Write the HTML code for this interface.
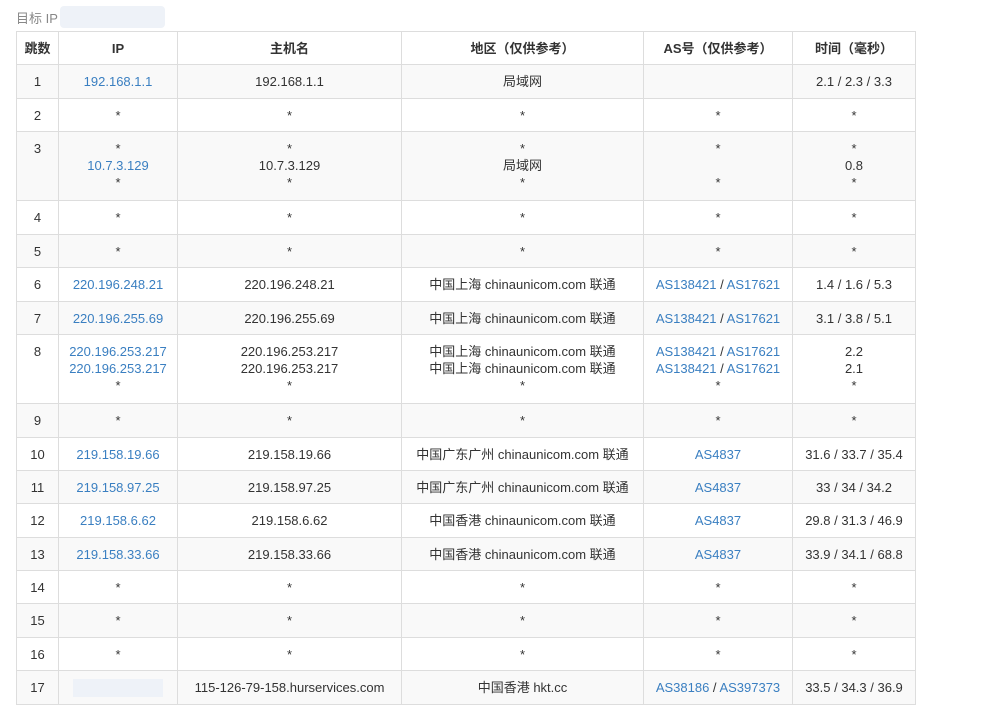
<!DOCTYPE html>
<html><head><meta charset="utf-8"><style>
body{margin:0;background:#fff;font-family:"Liberation Sans","Noto Sans CJK SC",sans-serif;font-size:13px;color:#333;}
.t{position:absolute;left:16px;top:8px;color:#888;font-size:13px;}
.blur{position:absolute;background:#eef2f8;border-radius:4px;}
table{position:absolute;left:16px;top:31px;border-collapse:collapse;table-layout:fixed;width:899px;}
td,th{border:1px solid #ddd;text-align:center;padding:0;line-height:17px;vertical-align:middle;}
th{font-weight:bold;height:32px;color:#333;}
tbody tr:nth-child(odd){background:#f9f9f9;}
a{color:#3a7fc1;text-decoration:none;}
.v td{vertical-align:top;padding-top:8px;}
</style></head><body>
<div class="t">目标 IP</div>
<div class="blur" style="left:60px;top:6px;width:105px;height:22px;"></div>
<table>
<colgroup><col style="width:42px"><col style="width:119px"><col style="width:224px"><col style="width:242px"><col style="width:149px"><col style="width:123px"></colgroup>
<thead><tr><th>跳数</th><th>IP</th><th>主机名</th><th>地区（仅供参考）</th><th>AS号（仅供参考）</th><th>时间（毫秒）</th></tr></thead>
<tbody>
<tr style="height:34px"><td>1</td><td><a>192.168.1.1</a></td><td>192.168.1.1</td><td>局域网</td><td></td><td>2.1 / 2.3 / 3.3</td></tr>
<tr style="height:33px"><td>2</td><td>*</td><td>*</td><td>*</td><td>*</td><td>*</td></tr>
<tr style="height:69px" class="v"><td>3</td><td>*<br><a>10.7.3.129</a><br>*</td><td>*<br>10.7.3.129<br>*</td><td>*<br>局域网<br>*</td><td>*<br><br>*</td><td>*<br>0.8<br>*</td></tr>
<tr style="height:34px"><td>4</td><td>*</td><td>*</td><td>*</td><td>*</td><td>*</td></tr>
<tr style="height:33px"><td>5</td><td>*</td><td>*</td><td>*</td><td>*</td><td>*</td></tr>
<tr style="height:34px"><td>6</td><td><a>220.196.248.21</a></td><td>220.196.248.21</td><td>中国上海 chinaunicom.com 联通</td><td><a>AS138421</a> / <a>AS17621</a></td><td>1.4 / 1.6 / 5.3</td></tr>
<tr style="height:33px"><td>7</td><td><a>220.196.255.69</a></td><td>220.196.255.69</td><td>中国上海 chinaunicom.com 联通</td><td><a>AS138421</a> / <a>AS17621</a></td><td>3.1 / 3.8 / 5.1</td></tr>
<tr style="height:69px" class="v"><td>8</td><td><a>220.196.253.217</a><br><a>220.196.253.217</a><br>*</td><td>220.196.253.217<br>220.196.253.217<br>*</td><td>中国上海 chinaunicom.com 联通<br>中国上海 chinaunicom.com 联通<br>*</td><td><a>AS138421</a> / <a>AS17621</a><br><a>AS138421</a> / <a>AS17621</a><br>*</td><td>2.2<br>2.1<br>*</td></tr>
<tr style="height:34px"><td>9</td><td>*</td><td>*</td><td>*</td><td>*</td><td>*</td></tr>
<tr style="height:33px"><td>10</td><td><a>219.158.19.66</a></td><td>219.158.19.66</td><td>中国广东广州 chinaunicom.com 联通</td><td><a>AS4837</a></td><td>31.6 / 33.7 / 35.4</td></tr>
<tr style="height:33px"><td>11</td><td><a>219.158.97.25</a></td><td>219.158.97.25</td><td>中国广东广州 chinaunicom.com 联通</td><td><a>AS4837</a></td><td>33 / 34 / 34.2</td></tr>
<tr style="height:34px"><td>12</td><td><a>219.158.6.62</a></td><td>219.158.6.62</td><td>中国香港 chinaunicom.com 联通</td><td><a>AS4837</a></td><td>29.8 / 31.3 / 46.9</td></tr>
<tr style="height:33px"><td>13</td><td><a>219.158.33.66</a></td><td>219.158.33.66</td><td>中国香港 chinaunicom.com 联通</td><td><a>AS4837</a></td><td>33.9 / 34.1 / 68.8</td></tr>
<tr style="height:33px"><td>14</td><td>*</td><td>*</td><td>*</td><td>*</td><td>*</td></tr>
<tr style="height:34px"><td>15</td><td>*</td><td>*</td><td>*</td><td>*</td><td>*</td></tr>
<tr style="height:33px"><td>16</td><td>*</td><td>*</td><td>*</td><td>*</td><td>*</td></tr>
<tr style="height:34px"><td>17</td><td><span style="display:inline-block;width:90px;height:18px;background:#eef2f8;vertical-align:middle"></span></td><td>115-126-79-158.hurservices.com</td><td>中国香港 hkt.cc</td><td><a>AS38186</a> / <a>AS397373</a></td><td>33.5 / 34.3 / 36.9</td></tr>
</tbody></table>
</body></html>
